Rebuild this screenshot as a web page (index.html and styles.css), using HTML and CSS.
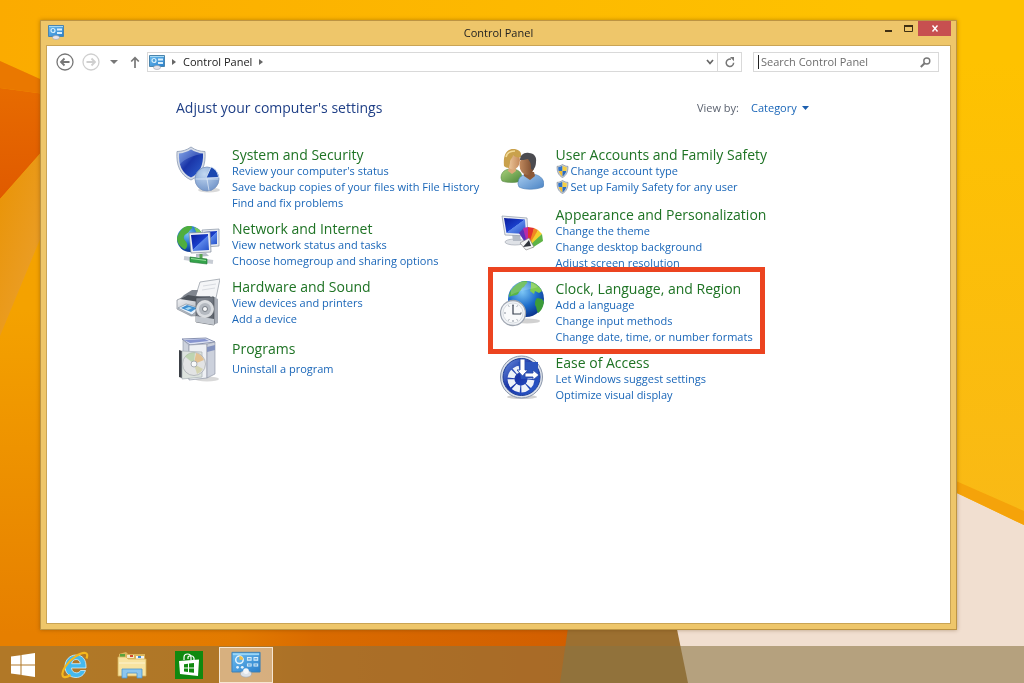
FILE: index.html
```
<!DOCTYPE html>
<html lang="en">
<head>
  <meta charset="UTF-8">
  <meta name="viewport" content="width=device-width, initial-scale=1.0">
  <title>Control Panel</title>
  <link rel="stylesheet" href="styles.css">
</head>
<body>
  <!-- shared gradients and symbols -->
  <svg class="defs" width="0" height="0" aria-hidden="true">
    <defs>
      <linearGradient id="g-blue" x1="0" y1="0" x2="1" y2="1">
        <stop offset="0" stop-color="#6f93e0"/><stop offset=".45" stop-color="#1a35a8"/><stop offset="1" stop-color="#2e62d0"/>
      </linearGradient>
      <linearGradient id="g-screen" x1="0" y1="0" x2="1" y2="1">
        <stop offset="0" stop-color="#0a1c9c"/><stop offset=".5" stop-color="#1a3fcb"/><stop offset=".52" stop-color="#5a86ea"/><stop offset="1" stop-color="#2450c8"/>
      </linearGradient>
      <linearGradient id="g-steel" x1="0" y1="0" x2="1" y2="1">
        <stop offset="0" stop-color="#f6f7f9"/><stop offset="1" stop-color="#969ca6"/>
      </linearGradient>
      <linearGradient id="g-dark" x1="0" y1="0" x2="1" y2="1">
        <stop offset="0" stop-color="#888e98"/><stop offset="1" stop-color="#555b64"/>
      </linearGradient>
      <radialGradient id="g-globe" cx=".4" cy=".3" r=".75">
        <stop offset="0" stop-color="#7cc6f5"/><stop offset=".55" stop-color="#1c6cca"/><stop offset="1" stop-color="#0b2f86"/>
      </radialGradient>
      <radialGradient id="g-pie" cx=".4" cy=".3" r=".8">
        <stop offset="0" stop-color="#c3d8f1"/><stop offset="1" stop-color="#6b8fc6"/>
      </radialGradient>
      <linearGradient id="g-skin" x1="0" y1="0" x2="1" y2="0">
        <stop offset="0" stop-color="#f4d3a8"/><stop offset="1" stop-color="#c4895a"/>
      </linearGradient>
      <linearGradient id="g-skin2" x1="0" y1="0" x2="1" y2="0">
        <stop offset="0" stop-color="#c18a5e"/><stop offset="1" stop-color="#744529"/>
      </linearGradient>
      <linearGradient id="g-green" x1="0" y1="0" x2="1" y2="1">
        <stop offset="0" stop-color="#a9d27c"/><stop offset="1" stop-color="#4b8538"/>
      </linearGradient>
      <linearGradient id="g-shirt" x1="0" y1="0" x2="1" y2="1">
        <stop offset="0" stop-color="#a9cdf0"/><stop offset="1" stop-color="#4a83c4"/>
      </linearGradient>
      <linearGradient id="g-cp" x1="0" y1="0" x2="1" y2="1">
        <stop offset="0" stop-color="#6dbdf0"/><stop offset="1" stop-color="#2a7fcb"/>
      </linearGradient>
    </defs>
    <symbol id="icon-control-panel" viewBox="0 0 32 28">
      <path d="M1 1h30v21H1z" fill="url(#g-cp)" stroke="#3b7fb4"/>
      <path d="M2 2h28v2H2z" fill="#9ad6f7"/>
      <circle cx="9" cy="9" r="4" fill="#5fb0e8" stroke="#e4f4fd" stroke-width="1.6"/>
      <path d="M9 9V5a4 4 0 0 1 4 4z" fill="#f2c14a"/>
      <path d="M17 6h5v4h-5zM24 6h5v4h-5zM17 13h5v3h-5zM24 13h5v3h-5z" fill="#d9effb"/>
      <path d="M18 8h3M25 8h3M18 14.5h3M25 14.5h3" stroke="#2f7fc4"/>
      <circle cx="7" cy="17" r="1.5" fill="#e4f4fd"/><circle cx="12" cy="17" r="1.5" fill="#e4f4fd"/>
      <ellipse cx="16" cy="24" rx="6" ry="3.5" fill="#dfe3e8" stroke="#9aa3ad" stroke-width=".6"/>
      <circle cx="16" cy="21" r="3" fill="#f4f6f8"/>
    </symbol>
    <!-- small version, drawn coarser so it reads at 16px -->
    <symbol id="icon-control-panel-small" viewBox="0 0 16 15">
      <path d="M.5.500h15v11H.5z" fill="url(#g-cp)" stroke="#4a84ad"/>
      <path d="M1 1h14v1H1z" fill="#a5daf6"/>
      <circle cx="5" cy="5.500" r="2" fill="#4da0dc" stroke="#d8effb" stroke-width="1.200"/>
      <path d="M9 3.500h5v2H9zM9 7h5v2H9z" fill="#d9effb"/>
      <ellipse cx="8" cy="12.500" rx="3.500" ry="2" fill="#e6e4ea" stroke="#9aa3ad" stroke-width=".6"/>
    </symbol>
    <symbol id="icon-uac" viewBox="0 0 14 16">
      <path d="M7 .5C5 2 3 2.6.8 2.7.6 9 2.5 13 7 15.5c4.500-2.500 6.400-6.500 6.200-12.800C11 2.600 9 2 7 .5z" fill="#c9d0d9" stroke="#7d8896" stroke-width=".8"/>
      <path d="M6.900 2C5.300 3 3.700 3.600 2.100 3.700c0 1.600.1 3 .5 4.200h4.300z" fill="#2f73c9"/>
      <path d="M7.100 2c1.600 1 3.200 1.600 4.800 1.700 0 1.600-.1 3-.5 4.200H7.100z" fill="#f5cf45"/>
      <path d="M6.900 8.100H2.700c.7 2.700 2 4.700 4.200 6.100z" fill="#f0bd2f"/>
      <path d="M7.100 8.100h4.200c-.7 2.700-2 4.700-4.200 6.100z" fill="#2b6abf"/>
    </symbol>
  </svg>

  <svg class="wallpaper" viewBox="0 0 1024 683" preserveAspectRatio="none" aria-hidden="true">
    <defs>
      <linearGradient id="w-base" x1="0" y1="0" x2="1" y2="0">
        <stop offset="0" stop-color="#fbab00"/><stop offset=".5" stop-color="#fdb900"/><stop offset=".85" stop-color="#fec200"/>
      </linearGradient>
      <linearGradient id="w-left" x1="0" y1="0" x2="0" y2="1">
        <stop offset="0" stop-color="#f4a300"/><stop offset=".4" stop-color="#f4a200"/><stop offset=".92" stop-color="#e67f00"/>
      </linearGradient>
      <linearGradient id="w-bottom" x1="0" y1="0" x2="1" y2="0">
        <stop offset="0" stop-color="#e67f00"/><stop offset=".35" stop-color="#e27a00"/><stop offset=".5" stop-color="#d96b00"/><stop offset="1" stop-color="#d25e00"/>
      </linearGradient>
      <linearGradient id="w-right" x1="0" y1="0" x2="0" y2="1">
        <stop offset="0" stop-color="#fec200"/><stop offset="1" stop-color="#f9b916"/>
      </linearGradient>
      <linearGradient id="w-dark" x1="0" y1="0" x2="0" y2="1">
        <stop offset="0" stop-color="#e76b00"/><stop offset="1" stop-color="#e05a00"/>
      </linearGradient>
      <linearGradient id="w-streak" x1="0" y1="0" x2="1" y2="1">
        <stop offset="0" stop-color="#e99200"/><stop offset="1" stop-color="#eba43c"/>
      </linearGradient>
    </defs>
    <path d="M0 0h1024v683H0z" fill="url(#w-base)"/>
    <path d="M0 61l60 27v595H0z" fill="url(#w-left)"/>
    <path d="M0 61l60 27v8L0 88z" fill="#ea7800"/>
    <path d="M0 88l60 8v35L0 199z" fill="url(#w-dark)"/>
    <path d="M0 199l60-68v60L0 336z" fill="url(#w-streak)"/>
    <path d="M50 600h530v83H50z" fill="url(#w-bottom)"/>
    <path d="M572 600h120v83H560z" fill="#9c7031"/>
    <path d="M671 600h353v83H688z" fill="#f1dfd0"/>
    <path d="M940 480l84 44v159h-84z" fill="#f1dfd0"/>
    <path d="M940 60h84v465l-84-40z" fill="url(#w-right)"/>
    <path d="M940 474l84 37v14l-84-40z" fill="#f5a30a"/>
  </svg>

  <div class="desktop">
    <main class="window">
      <header class="titlebar">
        <svg class="titlebar-icon"><use href="#icon-control-panel-small"/></svg>
        <h1>Control Panel</h1>
        <div class="window-buttons">
          <button type="button" aria-label="Minimize"><svg width="8" height="12" viewBox="0 0 8 12"><path d="M1 7h7v2H1z" fill="#3f3013"/></svg></button>
          <button type="button" aria-label="Maximize"><svg width="9" height="8" viewBox="0 0 9 8"><path d="M.5 1.500h8v5h-8z" fill="none" stroke="#3f3013"/><path d="M0 0h9v2H0z" fill="#3f3013"/></svg></button>
          <button type="button" class="close" aria-label="Close"><svg width="8" height="7" viewBox="0 0 8 7"><path d="M1.500 .5l5 6M6.500 .5l-5 6" stroke="#fff" stroke-width="1.400"/></svg></button>
        </div>
      </header>

      <div class="client">
        <nav class="toolbar">
          <button type="button" aria-label="Back"><svg width="18" height="18" viewBox="0 0 18 18" fill="none" stroke="#777"><circle cx="9" cy="9" r="8" stroke-width="1.300"/><path d="M13.500 9H5M8.500 5.500L5 9l3.500 3.500" stroke-width="1.800"/></svg></button>
          <button type="button" class="forward" aria-label="Forward"><svg width="18" height="18" viewBox="0 0 18 18" fill="none" stroke="#cfcfcf"><circle cx="9" cy="9" r="8" stroke-width="1.300"/><path d="M4.500 9H13M9.500 5.500L13 9l-3.500 3.500" stroke-width="1.800"/></svg></button>
          <button type="button" class="recent" aria-label="Recent locations"><svg width="8" height="4" viewBox="0 0 8 4"><path d="M0 0h8L4 4z" fill="#777"/></svg></button>
          <button type="button" class="up" aria-label="Up"><svg width="10" height="12" viewBox="0 0 10 12" fill="none" stroke="#777" stroke-width="1.700"><path d="M5 12V2M1.200 5.500L5 1.700l3.800 3.800"/></svg></button>
          <div class="address">
            <svg class="address-icon"><use href="#icon-control-panel-small"/></svg>
            <svg width="4" height="6" viewBox="0 0 4 6"><path d="M0 0l4 3-4 3z" fill="#666"/></svg>
            <a href="#">Control Panel</a>
            <svg width="4" height="6" viewBox="0 0 4 6"><path d="M0 0l4 3-4 3z" fill="#666"/></svg>
            <button type="button" class="history" aria-label="Previous locations"><svg width="8" height="6" viewBox="0 0 8 6"><path d="M1 1l3 3.500L7 1" fill="none" stroke="#666" stroke-width="1.700"/></svg></button>
            <button type="button" class="refresh" aria-label="Refresh"><svg width="10" height="11" viewBox="0 0 10 11"><path d="M8.600 5.800A3.700 3.700 0 1 1 6 2.300" fill="none" stroke="#777" stroke-width="1.500"/><path d="M5 0h4v4.200z" fill="#777"/></svg></button>
          </div>
          <form class="search">
            <input type="search" placeholder="Search Control Panel" aria-label="Search Control Panel">
            <button type="submit" aria-label="Search"><svg width="11" height="11" viewBox="0 0 11 11"><circle cx="6.800" cy="4" r="3" fill="none" stroke="#777" stroke-width="1.400"/><path d="M4.600 6.200L.8 10" stroke="#777" stroke-width="2"/></svg></button>
          </form>
        </nav>

        <section class="content">
          <div class="content-header">
            <h2>Adjust your computer's settings</h2>
            <div class="view-by">
              <label for="view">View by:</label>
              <select id="view">
                <option>Category</option>
              </select>
              <svg width="7" height="4" viewBox="0 0 7 4"><path d="M0 0h7L3.500 4z" fill="#1c5fae"/></svg>
            </div>
          </div>

          <div class="categories">
            <div class="column">
              <article class="category">
                <svg class="category-icon" viewBox="0 0 44 48">
                  <path d="M15 1C11 4 6 5.500 1 5.500 0 19 4 29 15 34c11-5 15-15 14-28.500C24 5.500 19 4 15 1z" fill="#d5dce8" stroke="#8c9bb4" stroke-width=".8"/>
                  <path d="M15 3.500C11 6 7 7.300 3 7.500 2.500 19 6 27 15 31.500c9-4.500 12.500-12.500 12-24C23 7.300 19 6 15 3.500z" fill="url(#g-blue)"/>
                  <path d="M3 7.500C7 7.300 11 6 15 3.500c4 2.500 8 3.800 12 4C20 9 8 12 3.600 19 3 16 2.800 11 3 7.500z" fill="#a7c3f4" opacity=".3"/>
                  <ellipse cx="33" cy="44" rx="11" ry="2.500" fill="#000" opacity=".15"/>
                  <circle cx="31" cy="33" r="12" fill="url(#g-pie)" stroke="#7a93bd" stroke-width=".8"/>
                  <path d="M31 33H19.500M31 33l2 11.500M31 33h11.500" stroke="#e8f1fb" stroke-width=".7"/>
                  <path d="M30 32l5-11c4 1.500 7 5 7.500 10.500z" fill="#1c48b0" stroke="#d5e2f4" stroke-width=".9"/>
                </svg>
                <div class="category-text">
                  <h3><a href="#">System and Security</a></h3>
                  <ul>
                    <li><a href="#">Review your computer's status</a></li>
                    <li><a href="#">Save backup copies of your files with File History</a></li>
                    <li><a href="#">Find and fix problems</a></li>
                  </ul>
                </div>
              </article>
              <article class="category">
                <svg class="category-icon" viewBox="0 0 44 48">
                  <circle cx="14" cy="19" r="13" fill="url(#g-globe)"/>
                  <path d="M7 8c3-2 7-2.500 9-1.500 1 2-2 3-3 5s-4 2-5 5 2 4 3 7-1 5-2 6C4 27 1 23 1 18c1-4 3-7 6-10z" fill="#4fae3e"/>
                  <path d="M18 7c4 1 6 3 8 6l-5 1z" fill="#79c95c"/>
                  <path d="M26 10l17-1v17l-14 1z" fill="#e6eaf0" stroke="#8893a3" stroke-width=".7"/>
                  <path d="M28 12l13-1v13l-11 1z" fill="url(#g-screen)"/>
                  <path d="M13 13l21-1 1 20-20 1z" fill="#eef1f5" stroke="#7c8797" stroke-width=".7"/>
                  <path d="M15 15l17-1 1 16-16 1z" fill="url(#g-screen)"/>
                  <path d="M20 34l10-1 3 3-13 1z" fill="#b6bdc8"/>
                  <path d="M25 34v5" stroke="#59a553" stroke-width="3"/>
                  <path d="M8 38l29 4" stroke="#c7ccd4" stroke-width="4"/>
                  <path d="M14 37l17 2v5l-17-2z" fill="#34a34a" stroke="#1e7332" stroke-width=".6"/>
                  <path d="M15 38.500l15 2" stroke="#97dd9c" stroke-width="1.200"/>
                </svg>
                <div class="category-text">
                  <h3><a href="#">Network and Internet</a></h3>
                  <ul>
                    <li><a href="#">View network status and tasks</a></li>
                    <li><a href="#">Choose homegroup and sharing options</a></li>
                  </ul>
                </div>
              </article>
              <article class="category">
                <svg class="category-icon" viewBox="0 0 44 48">
                  <path d="M24 4l20-3-4 19H19z" fill="#f4f5f7" stroke="#9ca2ab" stroke-width=".8"/>
                  <path d="M27 8l13-2M26 12l13-2" stroke="#d8dbe0"/>
                  <path d="M8 17l8-5h6l-2 6h14l3 6-26 4-10-4z" fill="#80868f"/>
                  <path d="M1 22l9-4 24 5-2 14-17 1L1 31z" fill="url(#g-steel)" stroke="#7e858f" stroke-width=".7"/>
                  <path d="M4 21l8-4 18 3-7 4z" fill="#4c525a"/>
                  <path d="M2 30l8-4 14 4-8 7z" fill="#e9f1fa" stroke="#72808f" stroke-width=".6"/>
                  <path d="M5 30l6-3 10 3-6 4z" fill="#3f8fd0"/>
                  <path d="M9 30.500l4-1.500 3 1-4 2z" fill="#a6d8f2"/>
                  <path d="M36 18l6 3v24l-5 2z" fill="#a8adb6"/>
                  <path d="M20 20l18-1v28l-18-3z" fill="url(#g-dark)" stroke="#444a52" stroke-width=".6"/>
                  <path d="M20 38l18 3v6l-18-3z" fill="#c2c7ce"/>
                  <circle cx="29" cy="31" r="8.500" fill="#d9dce0" stroke="#eee" stroke-width=".7"/>
                  <circle cx="29" cy="31" r="6" fill="#b4b9c0"/>
                  <circle cx="29" cy="31" r="2.500" fill="#f8f9fa" stroke="#60666e" stroke-width=".8"/>
                </svg>
                <div class="category-text">
                  <h3><a href="#">Hardware and Sound</a></h3>
                  <ul>
                    <li><a href="#">View devices and printers</a></li>
                    <li><a href="#">Add a device</a></li>
                  </ul>
                </div>
              </article>
              <article class="category single">
                <svg class="category-icon" viewBox="0 0 44 48">
                  <ellipse cx="31" cy="43" rx="12" ry="2.500" fill="#000" opacity=".15"/>
                  <path d="M6 3l24-1 9 4-25 3z" fill="#dfe4f3" stroke="#7d87a8" stroke-width=".9"/>
                  <path d="M8 4l21-1 4 2-19 2z" fill="#8795cf"/>
                  <path d="M7 4l6 5v34l-6-5z" fill="#cdd2dc" stroke="#8b93a4" stroke-width=".6"/>
                  <path d="M13 9l18-1v34l-18 2z" fill="#eef0f4" stroke="#9299a8" stroke-width=".7"/>
                  <path d="M31 8l8-2v32l-8 4z" fill="#ccd1dc" stroke="#878fa0" stroke-width=".6"/>
                  <path d="M31 11l8-2v5l-8 2z" fill="#8493be"/>
                  <path d="M3 14l3 1v27l-3-1z" fill="#3c4046"/>
                  <path d="M6 15l20 1v25l-20 2z" fill="#dde3de" stroke="#a8b0b4" stroke-width=".7"/>
                  <circle cx="18" cy="28" r="11.500" fill="#e2e3e4" stroke="#a9adb3" stroke-width=".8"/>
                  <path d="M18 28L9 20.500a11.500 11.500 0 0 1 10-4z" fill="#b5cfa4" opacity=".8"/>
                  <path d="M18 28l2-11a11.500 11.500 0 0 1 8 7z" fill="#e2bd86" opacity=".9"/>
                  <path d="M18 28l9 5a10 10 0 0 1-6 5z" fill="#cfcd9c" opacity=".7"/>
                  <circle cx="18" cy="28" r="3" fill="#f8f9fa" stroke="#999ea6" stroke-width=".8"/>
                </svg>
                <div class="category-text">
                  <h3><a href="#">Programs</a></h3>
                  <ul>
                    <li><a href="#">Uninstall a program</a></li>
                  </ul>
                </div>
              </article>
            </div>

            <div class="column">
              <article class="category">
                <svg class="category-icon" viewBox="0 0 44 48">
                  <path d="M1 32c0-6 4-9 10-9 7 0 11 3 11 9l-1 3c-6 2-14 2-19 0z" fill="url(#g-green)" stroke="#5c8b48" stroke-width=".6"/>
                  <path d="M9 20h6l1 5-4 3-4-3z" fill="#dba877"/>
                  <ellipse cx="13" cy="14" rx="7" ry="9.500" fill="url(#g-skin)"/>
                  <path d="M4 20C3 10 6 3 13 3c6 0 9 3 8 8-3 1-6 0-8-2 0 3-3 4-3 7 0 2-1 4-1 6-2 0-4-1-5-2z" fill="#c9a14c"/>
                  <path d="M6 11c1-4 4-6 9-6" stroke="#f2da96" stroke-width="1.500" fill="none"/>
                  <path d="M18 38c0-7 4-10 12-10 9 0 14 4 14 11l-1 2c-8 3-18 3-24 0z" fill="url(#g-shirt)" stroke="#4c7db5" stroke-width=".6"/>
                  <path d="M24 26h10l1 4-5 4-6-4z" fill="#8d5937"/>
                  <ellipse cx="27" cy="19" rx="7.500" ry="10" fill="url(#g-skin2)"/>
                  <path d="M20 14c0-5 4-8 9-7 5 0 8 4 7 9 0 3-1 6-3 8l-2-1c0-3 0-5-1-7l-2-3c-3 1-6 1-8 1z" fill="#4b4b50"/>
                </svg>
                <div class="category-text shielded">
                  <h3><a href="#">User Accounts and Family Safety</a></h3>
                  <ul>
                    <li><svg class="shield"><use href="#icon-uac"/></svg><a href="#">Change account type</a></li>
                    <li><svg class="shield"><use href="#icon-uac"/></svg><a href="#">Set up Family Safety for any user</a></li>
                  </ul>
                </div>
              </article>
              <article class="category">
                <svg class="category-icon" viewBox="0 0 44 48">
                  <ellipse cx="15" cy="36" rx="10" ry="3" fill="#dfe2e7" stroke="#a5abb5" stroke-width=".7"/>
                  <path d="M12 28h8l1 7h-8z" fill="#b6bcc6"/>
                  <path d="M2 10l25 2 1 18-23-1z" fill="#eef0f4" stroke="#98a1af" stroke-width=".8"/>
                  <path d="M4 12l21 1.500 1 14.500-19.500-1z" fill="url(#g-screen)"/>
                  <path d="M28 41l-9-14 4-4 7 15z" fill="#5b30b8"/>
                  <path d="M28 41l-5-19 5-1 3 17z" fill="#b82aa8"/>
                  <path d="M28 41V21l6 1-2 18z" fill="#e2322f"/>
                  <path d="M28 41l6-19 4 2-6 17z" fill="#f08722"/>
                  <path d="M28 41l10-17 4 4-10 12z" fill="#f3cf2d"/>
                  <path d="M28 41l14-13 1 7-11 7z" fill="#5fb446"/>
                  <path d="M20 37l9-5 5 9-8 3z" fill="#f5f5f5" stroke="#777" stroke-width=".6"/>
                  <path d="M29 34l-6 7 8-1z" fill="#30343a"/>
                </svg>
                <div class="category-text">
                  <h3><a href="#">Appearance and Personalization</a></h3>
                  <ul>
                    <li><a href="#">Change the theme</a></li>
                    <li><a href="#">Change desktop background</a></li>
                    <li><a href="#">Adjust screen resolution</a></li>
                  </ul>
                </div>
              </article>
              <article class="category highlighted">
                <svg class="category-icon" viewBox="0 0 44 48">
                  <ellipse cx="27" cy="41" rx="13" ry="2.500" fill="#000" opacity=".18"/>
                  <circle cx="26" cy="19" r="18" fill="url(#g-globe)"/>
                  <path d="M12 9c4-5 9-8 13-8 3 0 3 2 1 3-2 2-1 3-4 4-1 3-3 3-4 6-2 2-6 1-9 3 0-3 1-6 3-8z" fill="#58b545"/>
                  <path d="M31 2c5 1 9 5 11 9l-3 2-4-2-1 3-4-3 1-4z" fill="#7ecb50"/>
                  <path d="M37 18l5 1 2 3c-1 6-3 9-6 11-2-3-1-6-3-8 0-3 0-5 2-7z" fill="#3c9c3a"/>
                  <path d="M11 7C17 1 30-1 38 7c-8 3-18 3-27 8z" fill="#fff" opacity=".18"/>
                  <circle cx="13" cy="33" r="12.500" fill="#f1f3f6" stroke="#9ea5b0" stroke-width="1.300"/>
                  <circle cx="13" cy="33" r="10" fill="#f9fafb" stroke="#cdd2d9" stroke-width=".7"/>
                  <path d="M13 24v2M13 40v2M4 33h2M20 33h2M8.500 25.500l.7 1.200M17.500 25.500l-.7 1.200M8.500 40.500l.7-1.200M17.500 40.500l-.7-1.200" stroke="#808894" stroke-width=".9"/>
                  <path d="M13 25v9h8" fill="none" stroke="#37404e" stroke-width="1.200"/>
                </svg>
                <div class="category-text">
                  <h3><a href="#">Clock, Language, and Region</a></h3>
                  <ul>
                    <li><a href="#">Add a language</a></li>
                    <li><a href="#">Change input methods</a></li>
                    <li><a href="#">Change date, time, or number formats</a></li>
                  </ul>
                </div>
              </article>
              <article class="category">
                <svg class="category-icon" viewBox="0 0 44 48">
                  <ellipse cx="22" cy="43" rx="15" ry="2" fill="#000" opacity=".18"/>
                  <circle cx="21.500" cy="23" r="21" fill="#dde2ea" stroke="#8b97ab"/>
                  <circle cx="21.500" cy="23" r="18.500" fill="url(#g-blue)" stroke="#1c3c95"/>
                  <circle cx="21" cy="25" r="10" fill="none" stroke="#eef2f9" stroke-width="7" stroke-dasharray="6.500 1.354" transform="rotate(5 21 25)"/>
                  <path d="M21 25L18 8h20v16z" fill="#2d55bd"/>
                  <path d="M20 5h5v11h3l-5.500 6-5.500-6h3z" fill="#fff" stroke="#2a4ba8" stroke-width=".9"/>
                  <path d="M25 19h8v-3l6 5-6 5v-3h-8z" fill="#fff" stroke="#2a4ba8" stroke-width=".9"/>
                </svg>
                <div class="category-text">
                  <h3><a href="#">Ease of Access</a></h3>
                  <ul>
                    <li><a href="#">Let Windows suggest settings</a></li>
                    <li><a href="#">Optimize visual display</a></li>
                  </ul>
                </div>
              </article>
            </div>
          </div>
        </section>
      </div>
    </main>

    <footer class="taskbar">
      <button type="button" aria-label="Start">
        <svg width="24" height="24" viewBox="0 0 24 24" fill="#fff"><path d="M0 3.500l9.500-1.300v9.300H0zM10.500 2L24 0v11.500H10.500zM0 12.500h9.500v9.300L0 20.500zM10.500 12.500H24V24l-13.500-2z"/></svg>
      </button>
      <button type="button" aria-label="Internet Explorer">
        <svg width="28" height="28" viewBox="0 0 28 28">
          <path d="M25 17H10.500c.3 3.300 2.500 4.800 5 4.800 2 0 3.300-.8 4-2.300h5C23 24 19.500 26.500 15 26.500 8.500 26.500 4 22 4 15.500S8.800 4 15 4c6.500 0 10.500 4.500 10 13zM10.700 12.700h8.600c-.2-2.600-1.800-4.200-4.200-4.200-2.300 0-4 1.600-4.400 4.200z" fill="#45b9ee" stroke="#d6f1fc" stroke-width=".8"/>
          <path d="M25.500 7.500c1.200-3 .8-5-1-5.500C20 1 9.500 7.500 4 16 1 21 .5 25 3 26c1.500.6 4-.3 6.500-2" fill="none" stroke="#f5b81d" stroke-width="2.200"/>
        </svg>
      </button>
      <button type="button" aria-label="File Explorer">
        <svg width="30" height="28" viewBox="0 0 30 28">
          <path d="M2 3l7-2 2 2h17v7H2z" fill="#d9b45b"/>
          <path d="M3 3h5v3H3z" fill="#5aa33c"/><path d="M10 4h7v3h-7z" fill="#f5e9c5"/><path d="M13 4h3v2h-3z" fill="#d24a30"/><path d="M19 5h8v3h-8z" fill="#f3f5f7"/><path d="M21 5h3v2h-3z" fill="#3f8dd0"/>
          <path d="M1 6h8l2 2h18v17H1z" fill="#f8e3a0" stroke="#d6b45e" stroke-width=".8"/>
          <path d="M2 12h26" stroke="#fdf3cf"/>
          <path d="M5 27v-9h20v9h-5v-5H10v5z" fill="#8cc6ee" stroke="#4d96cc" stroke-width=".8"/>
        </svg>
      </button>
      <button type="button" aria-label="Store">
        <svg width="28" height="28" viewBox="0 0 28 28">
          <path d="M0 0h28v28H0z" fill="#10890f"/>
          <path d="M9 9V6.500a3.500 3.500 0 0 1 7 0V9M13 8V6a3.500 3.500 0 0 1 6 1v2" fill="none" stroke="#fff" stroke-width="1.200"/>
          <path d="M4 10l20-1.500L23 25 5 23z" fill="#fff"/>
          <path d="M9 13.200l4-.5v3.800H9zM14 12.600l5-.6v4.500h-5zM9 17.500h4v3.600l-4-.5zM14 17.500h5v4.300l-5-.6z" fill="#10890f"/>
        </svg>
      </button>
      <button type="button" class="active" aria-label="Control Panel">
        <svg width="30" height="27"><use href="#icon-control-panel"/></svg>
      </button>
    </footer>
  </div>
</body>
</html>
```
FILE: styles.css
```
* {
  box-sizing: border-box;
}

body {
  margin: 0;
  font-family: "Open Sans", "Noto Sans", sans-serif;
  font-size: 11px;
  line-height: 16px;
  color: #222;
}

h1, h2, h3, ul {
  margin: 0;
  padding: 0;
  font-weight: normal;
}

ul {
  list-style: none;
}

a {
  color: #1a66b8;
  text-decoration: none;
}

a:hover {
  text-decoration: underline;
}

button {
  display: flex;
  align-items: center;
  justify-content: center;
  padding: 0;
  border: none;
  background: none;
  cursor: pointer;
}

.defs {
  position: absolute;
}

.wallpaper {
  position: fixed;
  top: 0;
  left: 0;
  width: 100%;
  height: 100%;
  z-index: -1;
}

.desktop {
  display: flex;
  flex-direction: column;
  min-height: 100vh;
}

/* Window */
.window {
  flex: 1;
  display: flex;
  flex-direction: column;
  margin: 20px 67px 16px 40px;
  padding: 0 5px 5px;
  background: #eec66a;
  border: 1px solid #bd9443;
  box-shadow: 0 0 4px rgba(90, 50, 0, 0.4);
}

.titlebar {
  display: grid;
  grid-template-columns: 1fr auto 1fr;
  height: 24px;
}

.titlebar h1 {
  font-size: 11px;
  line-height: 24px;
}

.titlebar-icon {
  width: 16px;
  height: 15px;
  margin: 4px 2px;
}

.window-buttons {
  display: flex;
  justify-content: flex-end;
  align-items: flex-start;
}

.window-buttons button {
  width: 20px;
  height: 15px;
}

.window-buttons .close {
  width: 33px;
  background: #c75050;
}

.client {
  flex: 1;
  background: #fff;
  border: 1px solid #c9a455;
}

/* Address bar and search */
.toolbar {
  display: flex;
  align-items: center;
  padding: 6px 11px 0 9px;
}

.forward {
  margin-left: 8px;
}

.recent {
  margin-left: 10px;
}

.up {
  margin-left: 12px;
}

.address {
  flex: 1;
  display: flex;
  align-items: center;
  gap: 7px;
  height: 20px;
  margin-left: 7px;
  padding-left: 1px;
  border: 1px solid #d9d9d9;
}

.address-icon {
  width: 16px;
  height: 15px;
}

.address a {
  color: #222;
}

.history {
  margin-left: auto;
}

.refresh {
  width: 24px;
  height: 18px;
  margin-left: -4px;
  border-left: 1px solid #d9d9d9;
}

.search {
  display: flex;
  width: 186px;
  height: 20px;
  margin-left: 11px;
  padding: 0 7px 0 4px;
  border: 1px solid #d9d9d9;
}

.search input {
  flex: 1;
  min-width: 0;
  padding: 0 0 0 3px;
  border: none;
  outline: none;
  font: inherit;
  background: linear-gradient(#222, #222) left center / 1px 14px no-repeat;
}

.search input::placeholder {
  color: #6d6d6d;
}

/* Content */
.content {
  padding: 26px 141px 20px 129px;
}

.content-header {
  display: flex;
  justify-content: space-between;
  align-items: center;
  margin-bottom: 28px;
}

.content-header h2 {
  font-size: 14px;
  line-height: 20px;
  color: #1f3f86;
}

.view-by {
  display: flex;
  align-items: center;
  gap: 5px;
  color: #5c6370;
}

.view-by select {
  appearance: none;
  margin-left: 7px;
  padding: 0;
  border: none;
  background: none;
  font: inherit;
  color: #1a66b8;
}

.categories {
  display: grid;
  grid-template-columns: 1fr 1fr;
  column-gap: 14px;
}

.column {
  display: flex;
  flex-direction: column;
  align-items: flex-start;
  gap: 9px;
}

.category {
  display: flex;
  gap: 12px;
}

.category-icon {
  flex: none;
  width: 44px;
  height: 48px;
}

.category h3 {
  font-size: 14px;
  line-height: 17px;
}

.category h3 a {
  color: #1e7324;
}

.single {
  align-items: center;
}

.single .category-text {
  padding-bottom: 3px;
}

.single h3 {
  margin-bottom: 4px;
}

.shielded {
  padding-bottom: 2px;
}

.shielded li {
  display: flex;
  align-items: center;
  gap: 2px;
}

.shield {
  width: 13px;
  height: 14px;
}

.highlighted {
  position: relative;
}

.highlighted::after {
  content: "";
  position: absolute;
  inset: -13px -12px -9px -12px;
  border: 5px solid #ec4420;
  pointer-events: none;
}

/* Taskbar */
.taskbar {
  display: flex;
  align-items: center;
  height: 37px;
  background: rgba(138, 115, 68, 0.58);
}

.taskbar button {
  width: 54px;
  height: 36px;
  margin-right: 3px;
}

.taskbar button:first-child {
  width: 45px;
}

.taskbar .active {
  background: rgba(255, 235, 215, 0.5);
  border: 1px solid #f6e6d2;
}
```
